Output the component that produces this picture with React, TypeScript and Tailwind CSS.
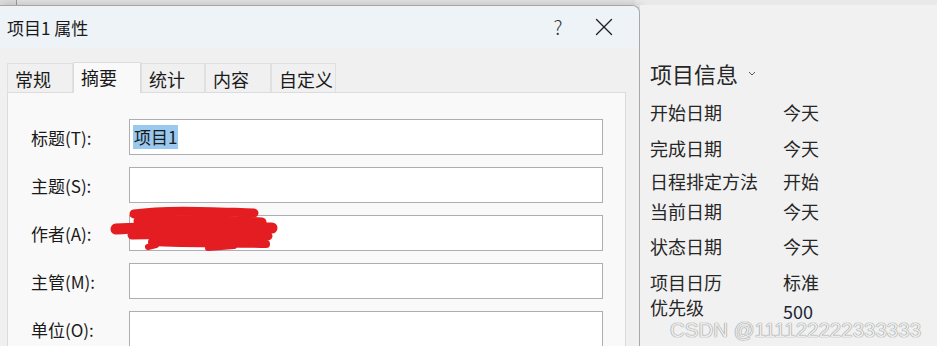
import { X } from 'lucide-react';

const fields = [
  { label: '标题(T):', value: '项目1' },
  { label: '主题(S):' },
  { label: '作者(A):' },
  { label: '主管(M):' },
  { label: '单位(O):' },
];

const tabs = [
  { name: '常规', w: 'w-[66px]' },
  { name: '摘要', w: 'w-[68px]', active: true },
  { name: '统计', w: 'w-[64px]' },
  { name: '内容', w: 'w-[66px]' },
  { name: '自定义', w: 'w-[65px]' },
];

const info = [
  { k: '开始日期', v: '今天', h: 'h-[36px]' },
  { k: '完成日期', v: '今天', h: 'h-[36px]' },
  { k: '日程排定方法', v: '开始', h: 'h-[30px]' },
  { k: '当前日期', v: '今天', h: 'h-[30px]' },
  { k: '状态日期', v: '今天', h: 'h-[40px]' },
  { k: '项目日历', v: '标准', h: 'h-[32px]' },
];

function Scribble() {
  // 作者栏被涂掉的部分
  return (
    <svg
      className="absolute left-[108px] top-[204px]"
      width="176"
      height="50"
      viewBox="0 0 176 50"
      fill="none"
      stroke="#e31d21"
      strokeLinecap="round"
    >
      <path d="M26 10 C60 5 110 8 146 9" strokeWidth="9" />
      <path d="M30 17 C70 15 120 16 154 18" strokeWidth="9" />
      <path d="M8 25 C50 22 120 24 164 24" strokeWidth="11" />
      <path d="M24 31 C60 30 120 33 160 32" strokeWidth="9" />
      <path d="M44 38 C80 40 130 39 158 40" strokeWidth="8" />
      <path d="M40 43 L48 41" strokeWidth="6" />
      <path d="M100 44 L126 42" strokeWidth="6" />
    </svg>
  );
}

export default function App() {
  return (
    <div className="relative w-[937px] h-[346px] overflow-hidden bg-[#f0f0f0] flex flex-col font-['Noto_Sans_CJK_SC',sans-serif] text-[#1a1a1a]">
      {/* 背后窗口的一条 */}
      <div className="h-[5px] flex shrink-0">
        <div className="w-[17px] bg-[#dcdcdc] border-r border-[#9c9c9c]" />
        <div className="w-[618px] bg-[#e2e2e2]" />
        <div className="flex-1 bg-[#e9e9e9]" />
      </div>

      <div className="flex flex-1 min-h-0">
        {/* 对话框 */}
        <div className="w-[640px] shrink-0 flex flex-col bg-[#f0f0f0] border-t border-r border-[#a7a7a7] rounded-tr-[8px] shadow-[3px_0_8px_rgba(0,0,0,0.18)] overflow-hidden">
          <div className="h-[42px] shrink-0 bg-[#eef3f8] flex items-center pl-[7px] pr-[12px]">
            <span className="text-[17px] leading-none">项目1 属性</span>
            <span className="ml-auto w-[46px] text-center text-[20px] font-light leading-none text-[#333]">?</span>
            <span className="w-[46px] flex justify-center">
              <X className="w-[30px] h-[30px] text-[#222]" strokeWidth={1.1} />
            </span>
          </div>

          <div className="flex-1 pt-[13px] pl-[7px] pr-[13px]">
            <div className="flex items-end h-[31px]">
              {tabs.map((t) => (
                <div
                  key={t.name}
                  className={
                    t.active
                      ? `${t.w} h-[31px] relative z-10 -mb-px pl-[7px] pt-[3px] text-[18px] leading-[22px] bg-[#f9f9f9] border border-b-0 border-[#dcdcdc]`
                      : `${t.w} h-[29px] pl-[7px] pt-[4px] text-[18px] leading-[22px] bg-[#f0f0f0] border border-b-0 border-[#e0e0e0]`
                  }
                >
                  {t.name}
                </div>
              ))}
            </div>

            <div className="h-[300px] bg-[#f9f9f9] border border-[#dcdcdc] pt-[26px] pl-[23px] flex flex-col gap-[12px]">
              {fields.map((f) => (
                <div key={f.label} className="flex items-center">
                  <div className="w-[98px] text-[17px] leading-none">{f.label}</div>
                  <div className="w-[474px] h-[36px] shrink-0 bg-white border border-[#adadb3] flex items-center pl-[3px]">
                    {f.value && (
                      <span className="bg-[#99c9ef] h-[24px] px-[1px] text-[17px] leading-[24px]">{f.value}</span>
                    )}
                  </div>
                </div>
              ))}
            </div>
          </div>
        </div>

        {/* 项目信息 */}
        <div className="flex-1 pl-[10px] pt-[53px] bg-[#f1f1f1] text-[#262626]">
          <div className="h-[30px] flex items-center gap-[10px]">
            <span className="text-[22px] leading-none">项目信息</span>
            <svg width="8" height="5" viewBox="0 0 8 5" fill="none" stroke="#555" strokeWidth="1">
              <path d="M1 1 L4 4 L7 1" />
            </svg>
          </div>
          <div className="mt-[6px] flex flex-col">
            {info.map((r) => (
              <div key={r.k} className={`${r.h} flex items-center text-[18px] leading-none`}>
                <span className="w-[133px]">{r.k}</span>
                <span>{r.v}</span>
              </div>
            ))}
            <div className="flex text-[18px] leading-none">
              <span className="w-[133px]">优先级</span>
              <span className="pt-[4px] text-[#1c2536]">500</span>
            </div>
          </div>
        </div>
      </div>

      <Scribble />

      <div className="absolute left-[670px] top-[318px] text-[20.5px] leading-[24px] font-['Liberation_Sans',sans-serif] text-[#ececec] [text-shadow:0_0_1px_#8a8a8a,0_0_1px_#8a8a8a]">
        CSDN @111122222333333
      </div>
    </div>
  );
}
